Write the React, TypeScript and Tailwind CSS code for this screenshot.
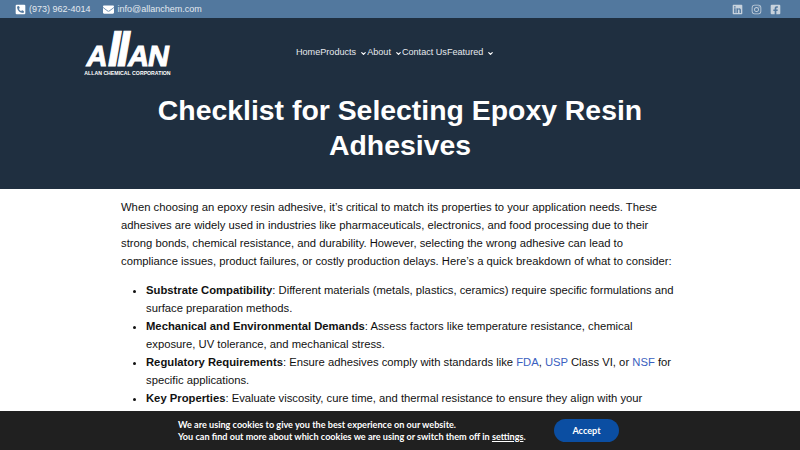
import { ChevronDown } from "lucide-react";
import { FaPhoneSquareAlt, FaEnvelope, FaLinkedin, FaInstagram, FaFacebookSquare } from "react-icons/fa";

const NAV = [
  { label: "Home", caret: false },
  { label: "Products", caret: true },
  { label: "About", caret: true },
  { label: "Contact Us", caret: false },
  { label: "Featured", caret: true },
];

function Logo() {
  return (
    <div className="flex w-[87px] flex-col items-center text-white">
      <div className="ml-[3px] flex h-[38px] -skew-x-[10deg] items-baseline font-bold leading-[38px] [-webkit-text-stroke:1px_white]">
        <span className="text-[29px]">A</span>
        <span className="-ml-[1px] text-[48px]">l</span>
        <span className="-ml-[4px] text-[48px]">l</span>
        <span className="-ml-[1px] text-[29px]">A</span>
        <span className="-ml-[1px] text-[29px]">N</span>
      </div>
      <span className="whitespace-nowrap text-[5.2px] font-bold leading-[8px]">
        ALLAN CHEMICAL CORPORATION
      </span>
    </div>
  );
}

export default function App() {
  return (
    <div className="relative h-[450px] w-[800px] overflow-hidden bg-white font-['Liberation_Sans',sans-serif]">
      {/* top contact bar */}
      <div className="flex h-[18px] items-center justify-between bg-[#52789e] pl-[15px] pr-[19px] text-[9px] text-[#e3e9ef]">
        <div className="flex items-center gap-[12px]">
          <span className="flex items-center gap-[3px]">
            <FaPhoneSquareAlt className="h-[11px] w-[11px] text-white" />
            <span className="pt-[2px]">(973) 962-4014</span>
          </span>
          <span className="flex items-center gap-[4px]">
            <FaEnvelope className="h-[11px] w-[11px] text-white" />
            <span className="pt-[2px]">info@allanchem.com</span>
          </span>
        </div>
        <div className="flex items-center gap-[8px] text-[#c7d2dd]">
          <FaLinkedin className="h-[11px] w-[11px]" />
          <FaInstagram className="h-[11px] w-[11px]" />
          <FaFacebookSquare className="h-[11px] w-[11px]" />
        </div>
      </div>

      {/* header */}
      <header className="h-[171px] bg-[#1f2f40]">
        <div className="flex h-[75px] pl-[84px] pt-[13px]">
          <Logo />
          <nav className="ml-[125px] mt-[15px] flex h-[14px] items-center text-[9.1px] text-[#e6eaee]">
            {NAV.map((item) => (
              <span key={item.label} className="flex items-center whitespace-nowrap">
                {item.label}
                {item.caret && <ChevronDown className="ml-[4px] mt-[1px] h-[7px] w-[7px] text-white" strokeWidth={4} />}
              </span>
            ))}
          </nav>
        </div>
        <h1 className="mx-auto w-[520px] text-center text-[28.4px] font-bold leading-[35px] text-white">
          Checklist for Selecting Epoxy Resin Adhesives
        </h1>
      </header>

      {/* article */}
      <main className="ml-[121px] w-[558px] pt-[9px] text-[11.26px] leading-[18px] text-[#111]">
        <p>
          When choosing an epoxy resin adhesive, it’s critical to match its properties to your application needs. These
          adhesives are widely used in industries like pharmaceuticals, electronics, and food processing due to their
          strong bonds, chemical resistance, and durability. However, selecting the wrong adhesive can lead to
          compliance issues, product failures, or costly production delays. Here’s a quick breakdown of what to consider:
        </p>
        <ul className="mt-[11px] list-disc pl-[25px]">
          <li>
            <strong>Substrate Compatibility</strong>: Different materials (metals, plastics, ceramics) require specific
            formulations and surface preparation methods.
          </li>
          <li>
            <strong>Mechanical and Environmental Demands</strong>: Assess factors like temperature resistance, chemical
            exposure, UV tolerance, and mechanical stress.
          </li>
          <li>
            <strong>Regulatory Requirements</strong>: Ensure adhesives comply with standards like{" "}
            <a className="text-[#3b5fc0]">FDA</a>, <a className="text-[#3b5fc0]">USP</a> Class VI, or{" "}
            <a className="text-[#3b5fc0]">NSF</a> for specific applications.
          </li>
          <li>
            <strong>Key Properties</strong>: Evaluate viscosity, cure time, and thermal resistance to ensure they align
            with your
          </li>
        </ul>
      </main>

      {/* cookie notice */}
      <div className="absolute inset-x-0 bottom-0 flex h-[39px] items-center bg-[#202020] pl-[178px] font-['Lato',sans-serif] text-[9.1px] font-bold leading-[12px] text-white">
        <div className="w-[376px]">
          We are using cookies to give you the best experience on our website.
          <br />
          You can find out more about which cookies we are using or switch them off in{" "}
          <span className="underline">settings</span>.
        </div>
        <button className="flex h-[23px] w-[65px] items-center justify-center rounded-full bg-[#0b4ea2] text-[9.1px] font-bold text-white">
          Accept
        </button>
      </div>
    </div>
  );
}
